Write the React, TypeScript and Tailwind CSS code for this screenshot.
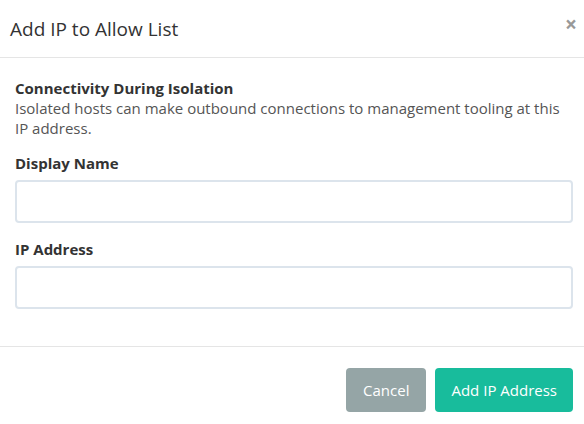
export default function App() {
  return (
    <div
      className="w-[584px] h-[424px] bg-white text-[#333] overflow-hidden"
      style={{ fontFamily: '"Open Sans", "Liberation Sans", sans-serif' }}
    >
      <div className="flex items-center justify-between h-[58px] pl-[10px] pr-[7px] border-b border-[#e5e5e5]">
        <h2 className="text-[19px] leading-[28px] text-[#333]">Add IP to Allow List</h2>
        <button className="text-[#999] text-[21px] font-bold leading-none pb-[8px]">×</button>
      </div>

      <div className="pl-[15px] pr-[11px] pt-[20px] pb-[37px] border-b border-[#e5e5e5]">
        <div className="text-[15px] leading-[20px] font-bold text-[#333]">Connectivity During Isolation</div>
        <p className="text-[15px] leading-[20px] text-[#555] pr-[4px]">
          Isolated hosts can make outbound connections to management tooling at this IP address.
        </p>

        <label className="block mt-[15px] text-[15px] leading-[20px] font-bold text-[#333]">Display Name</label>
        <input
          type="text"
          className="block mt-[7px] w-full h-[43px] rounded-[4px] border-2 border-[#dce4ec] bg-white outline-none"
        />

        <label className="block mt-[16px] text-[15px] leading-[20px] font-bold text-[#333]">IP Address</label>
        <input
          type="text"
          className="block mt-[7px] w-full h-[43px] rounded-[4px] border-2 border-[#dce4ec] bg-white outline-none"
        />
      </div>

      <div className="flex justify-end gap-[9px] px-[11px] pt-[21px]">
        <button className="h-[44px] px-[17px] rounded-[4px] bg-[#95a5a6] text-white text-[15px]">Cancel</button>
        <button className="h-[44px] px-[16px] rounded-[4px] bg-[#18bc9c] text-white text-[15px]">Add IP Address</button>
      </div>
    </div>
  );
}
